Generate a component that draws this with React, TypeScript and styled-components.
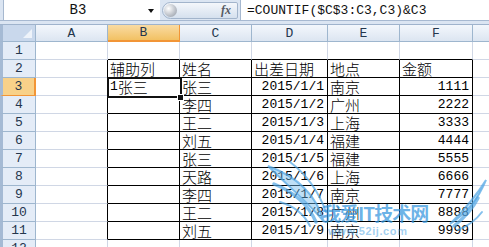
import React from "react";
import styled, { createGlobalStyle, css } from "styled-components";

const GlobalStyle = createGlobalStyle`
  html, body {
    margin: 0;
    padding: 0;
    background: #ffffff;
    overflow: hidden;
  }
  body {
    font-family: "Liberation Mono", "Noto Sans CJK SC", monospace;
  }
`;

const WIDTHS = [36, 72, 72, 72, 76, 72, 73, 60];
const LETTERS = ["A", "B", "C", "D", "E", "F", ""];

const ROWS: string[][] = [
  ["", "", "", "", "", ""],
  ["", "辅助列", "姓名", "出差日期", "地点", "金额"],
  ["", "1张三", "张三", "2015/1/1", "南京", "1111"],
  ["", "", "李四", "2015/1/2", "广州", "2222"],
  ["", "", "王二", "2015/1/3", "上海", "3333"],
  ["", "", "刘五", "2015/1/4", "福建", "4444"],
  ["", "", "张三", "2015/1/5", "福建", "5555"],
  ["", "", "天路", "2015/1/6", "上海", "6666"],
  ["", "", "李四", "2015/1/7", "南京", "7777"],
  ["", "", "王二", "2015/1/8", "广州", "8888"],
  ["", "", "刘五", "2015/1/9", "南京", "9999"],
  ["", "", "", "", "", ""],
];

const Page = styled.div`
  width: 489px;
  height: 247px;
  overflow: hidden;
  background: #ffffff;
`;

const TopBar = styled.div`
  height: 25px;
  background: #dbe5f2;
  box-sizing: border-box;
  border-bottom: 1px solid #9fb3cc;
`;

const FormulaRow = styled.div`
  display: flex;
  height: 21px;
  padding-left: 3px;
  box-sizing: border-box;
  border-bottom: 1px solid #a7b9d1;
`;

const NameBox = styled.div`
  position: relative;
  width: 157px;
  background: #ffffff;
  border-left: 1px solid #a6b8cf;
  box-sizing: border-box;
  display: flex;
  align-items: center;
  justify-content: center;
  padding-right: 8px;
  font-size: 14px;
  color: #111;
`;

const DropArrow = styled.span`
  position: absolute;
  right: 6px;
  top: 9px;
  width: 0;
  height: 0;
  border-left: 3px solid transparent;
  border-right: 3px solid transparent;
  border-top: 4px solid #111;
`;

const Pill = styled.div`
  width: 76px;
  height: 17px;
  margin: 2px 2px 0 2px;
  border: 1px solid #a2b4cb;
  border-radius: 9px 2px 2px 9px;
  box-sizing: border-box;
  background: linear-gradient(#f4f7fb, #d5e0ee);
  display: flex;
  align-items: center;
  justify-content: space-between;
  padding: 0 6px 0 1px;
`;

const Knob = styled.span`
  width: 13px;
  height: 13px;
  border-radius: 50%;
  background: radial-gradient(circle at 35% 35%, #ffffff, #b9bec6 60%, #8e959f);
`;

const Fx = styled.span`
  font-family: "Liberation Serif", serif;
  font-style: italic;
  font-weight: bold;
  font-size: 12px;
  color: #555a63;
`;

const FormulaInput = styled.div`
  flex: 1;
  background: #ffffff;
  border-left: 1px solid #a6b8cf;
  display: flex;
  align-items: center;
  padding-left: 6px;
  font-size: 13px;
  color: #111;
  white-space: nowrap;
`;

const SheetWrap = styled.div`
  position: relative;
`;

const Grid = styled.div`
  display: grid;
  grid-template-columns: ${WIDTHS.map((w) => `${w}px`).join(" ")};
  grid-template-rows: 17px repeat(12, 18px);
`;

const headBase = css`
  box-sizing: border-box;
  display: flex;
  align-items: center;
  justify-content: center;
  font-size: 13px;
  color: #24364d;
  border-right: 1px solid #9eb6ce;
  border-bottom: 1px solid #9eb6ce;
`;

const Corner = styled.div`
  ${headBase};
  border-left: 3px solid #a5bad4;
  background: #c9d8ec;
  position: relative;
  &::after {
    content: "";
    position: absolute;
    right: 3px;
    bottom: 3px;
    border-left: 9px solid transparent;
    border-bottom: 9px solid #eef3fa;
  }
`;

const ColHead = styled.div<{ $on?: boolean }>`
  ${headBase};
  background: ${(p) =>
    p.$on
      ? "linear-gradient(#f9dba3, #f2c163)"
      : "linear-gradient(#f3f7fc, #dce5f1)"};
  ${(p) => p.$on && "border-bottom: 2px solid #f29536; border-right-color: #f29536;"}
`;

const RowHead = styled.div<{ $on?: boolean }>`
  ${headBase};
  border-left: 3px solid #a5bad4;
  background: ${(p) => (p.$on ? "#f8d189" : "#e4ecf7")};
  ${(p) => p.$on && "border-right: 2px solid #f29536; border-bottom-color: #f29536;"}
`;

const Cell = styled.div<{ $right?: boolean; $edgeR?: boolean; $edgeB?: boolean }>`
  box-sizing: border-box;
  border-right: 1px solid ${(p) => (p.$edgeR ? "#000" : "#d0d7e5")};
  border-bottom: 1px solid ${(p) => (p.$edgeB ? "#000" : "#d0d7e5")};
  display: flex;
  align-items: center;
  justify-content: ${(p) => (p.$right ? "flex-end" : "flex-start")};
  padding: 1px ${(p) => (p.$right ? "3px" : "0")} 0 ${(p) => (p.$right ? "0" : "2px")};
  font-size: 13px;
  line-height: 16px;
  color: #000;
  white-space: nowrap;
`;

const Han = styled.span`
  font-family: "Noto Sans CJK SC", sans-serif;
  font-size: 15px;
  line-height: 16px;
  font-weight: 300;
`;

const Selection = styled.div`
  position: absolute;
  left: 107px;
  top: 52px;
  width: 75px;
  height: 21px;
  box-sizing: border-box;
  border: 2px solid #111;
  box-shadow: inset 0 0 0 1px #ffffff;
  pointer-events: none;
`;

const Handle = styled.div`
  position: absolute;
  left: 177px;
  top: 69px;
  width: 5px;
  height: 5px;
  background: #111;
  border: 1px solid #fff;
`;

const Watermark = styled.div`
  position: absolute;
  left: 260px;
  top: 125px;
  width: 229px;
  height: 97px;
  pointer-events: none;
`;

const MarkTitle = styled.div`
  position: absolute;
  left: 62px;
  top: 53px;
  font-family: "Noto Sans CJK SC", sans-serif;
  font-weight: bold;
  font-size: 19px;
  line-height: 20px;
  color: rgba(52, 150, 222, 0.72);
  letter-spacing: -1px;
  white-space: nowrap;
`;

const MarkUrl = styled.div`
  position: absolute;
  left: 68px;
  top: 75px;
  font-family: "Liberation Sans", sans-serif;
  font-weight: bold;
  font-size: 11px;
  letter-spacing: 0.6px;
  color: rgba(70, 160, 226, 0.5);
  white-space: nowrap;
`;

const isHan = (s: string) => /[\u4e00-\u9fff]/.test(s);

const CellText = ({ text }: { text: string }) => (
  <>
    {text
      .split(/([\u4e00-\u9fff]+)/)
      .filter(Boolean)
      .map((part, i) =>
        isHan(part) ? <Han key={i}>{part}</Han> : <React.Fragment key={i}>{part}</React.Fragment>
      )}
  </>
);

export default function App() {
  return (
    <Page>
      <GlobalStyle />
      <TopBar>
        <FormulaRow>
          <NameBox>
            B3
            <DropArrow />
          </NameBox>
          <Pill>
            <Knob />
            <Fx>fx</Fx>
          </Pill>
          <FormulaInput>=COUNTIF($C$3:C3,C3)&amp;C3</FormulaInput>
        </FormulaRow>
      </TopBar>
      <SheetWrap>
        <Grid>
          <Corner />
          {LETTERS.map((l, i) => (
            <ColHead key={i} $on={l === "B"}>
              {l}
            </ColHead>
          ))}
          {ROWS.map((row, r) => {
            const rowNo = r + 1;
            const inTable = rowNo >= 2 && rowNo <= 11;
            return (
              <React.Fragment key={r}>
                <RowHead $on={rowNo === 3}>{rowNo}</RowHead>
                {row.map((text, c) => (
                  <Cell
                    key={c}
                    $right={/^[\d/]+$/.test(text) && text !== ""}
                    $edgeR={inTable}
                    $edgeB={c >= 1 && rowNo >= 1 && rowNo <= 11}
                  >
                    <CellText text={text} />
                  </Cell>
                ))}
                <Cell />
              </React.Fragment>
            );
          })}
        </Grid>
        <Selection />
        <Handle />
        <Watermark>
          <svg width="229" height="97" viewBox="0 0 229 97">
            <g fill="rgba(110,185,235,0.45)" stroke="rgba(80,165,228,0.7)" strokeLinecap="round">
              <path d="M8 16 C 36 26, 56 44, 64 72 C 48 52, 30 38, 8 16 Z" strokeWidth="2" />
              <path d="M14 34 C 34 42, 48 54, 56 72" fill="none" strokeWidth="3.5" />
              <path d="M30 12 C 46 24, 58 40, 66 62" fill="none" strokeWidth="2" />
              <path d="M20 52 C 34 56, 44 64, 50 76" fill="none" strokeWidth="2" />
              <path d="M226 30 C 218 50, 206 64, 190 74 C 206 58, 216 46, 226 30 Z" strokeWidth="2" />
              <path d="M218 48 C 212 60, 204 68, 194 76" fill="none" strokeWidth="3.5" />
              <path d="M222 62 C 216 70, 208 76, 198 80" fill="none" strokeWidth="2" />
            </g>
          </svg>
          <MarkTitle>我爱IT技术网</MarkTitle>
          <MarkUrl>www.52ij.com</MarkUrl>
        </Watermark>
      </SheetWrap>
    </Page>
  );
}
